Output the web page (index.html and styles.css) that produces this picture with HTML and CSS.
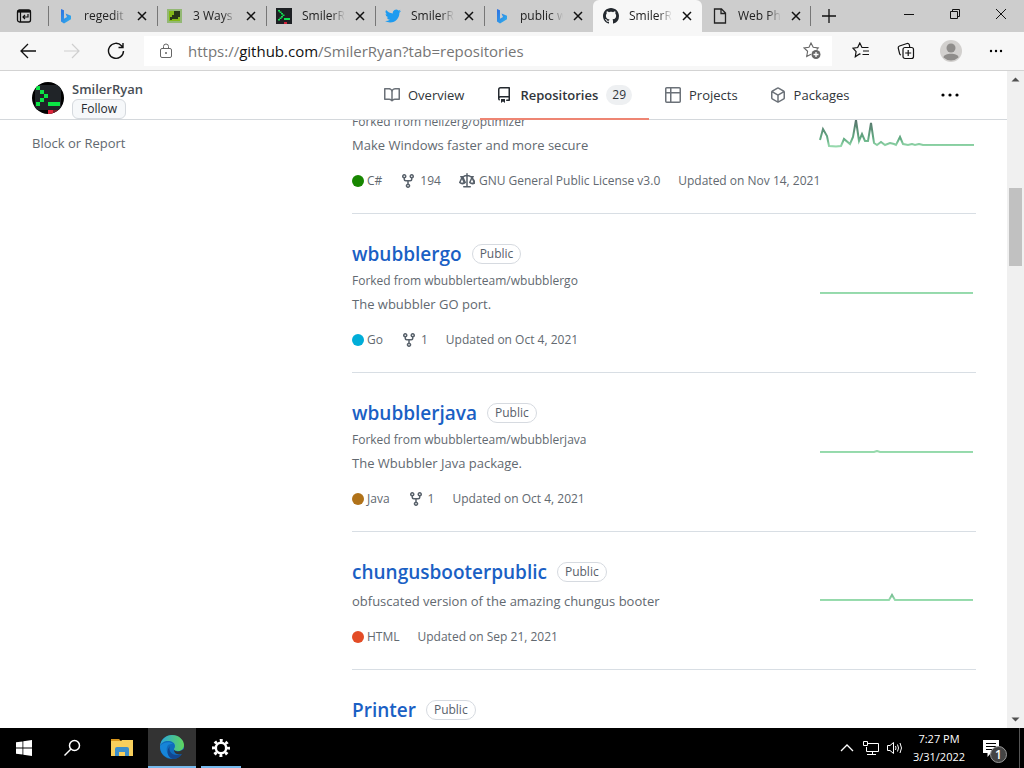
FILE: index.html
```html
<!DOCTYPE html>
<html lang="en">
<head>
<meta charset="utf-8">
<title>SmilerRyan / Repositories</title>
<link rel="stylesheet" href="styles.css">
</head>
<body>
<svg class="defs" aria-hidden="true">
  <defs>
    <linearGradient id="bingFill" x1="0" y1="0" x2="1" y2="1"><stop offset="0" stop-color="#2f6fe0"/><stop offset="1" stop-color="#2fb4ee"/></linearGradient>
    <linearGradient id="sparkFill" gradientUnits="userSpaceOnUse" x1="0" y1="28" x2="0" y2="0"><stop offset="0" stop-color="#98dcae"/><stop offset=".3" stop-color="#62ab82"/><stop offset="1" stop-color="#56706a"/></linearGradient>
    <linearGradient id="edgeTop" x1="0" y1="0" x2="1" y2="0"><stop offset="0" stop-color="#2aa5dc"/><stop offset="1" stop-color="#5fd65c"/></linearGradient>
    <symbol id="x" viewBox="0 0 10 10"><path d="M1 1l8 8M9 1L1 9" stroke="#111" stroke-width="1.500" fill="none"/></symbol>
    <symbol id="bing" viewBox="0 0 16 16"><path d="M3 1l3 1.200v8.500L9 9 7.500 5.500 13 7.700v3.500L6 15.500 3 13.500z" fill="url(#bingFill)"/></symbol>
    <symbol id="prompt" viewBox="0 0 16 16"><path d="M0 0h16v16H0z" fill="#1d2023"/><path d="M2 2h2v1.500h1.500V5H7v1.500h1.500V8H7v1.500H5.500V11H4v1.500H2V11h1.500V9.500H5V8h1.500V6.500H5V5H3.500V3.500H2zM8 10h6v2H8z" fill="#12e052"/><path d="M8 14h3v2H8z" fill="#d3233b"/></symbol>
    <symbol id="fork" viewBox="0 0 16 16"><path fill-rule="evenodd" d="M5 3.250a.75.75 0 11-1.500 0 .75.75 0 011.500 0zm0 2.122a2.250 2.250 0 10-1.500 0v.878A2.250 2.250 0 005.750 8.500h1.500v2.128a2.251 2.251 0 101.500 0V8.500h1.500a2.250 2.250 0 002.250-2.250v-.878a2.250 2.250 0 10-1.500 0v.878a.75.75 0 01-.75.75h-4.500A.75.75 0 015 6.250v-.878zm3.750 7.378a.75.75 0 11-1.500 0 .75.75 0 011.500 0zm3-8.750a.75.75 0 100-1.500.75.75 0 000 1.500z"/></symbol>
  </defs>
</svg>

<header class="tabbar">
  <button class="tab-actions" aria-label="Tab actions menu"><svg width="16" height="16" viewBox="0 0 16 16" fill="none" stroke="#111"><rect x="1.500" y="2" width="13" height="12" rx="2" stroke-width="1.300"/><path d="M1.500 3.300h13" stroke-width="2.600"/><path d="M4.500 4v10" stroke-width="1.200"/><path d="M12 6v3H7M9 7L7 9l2 2" stroke-width="1.200"/></svg></button>
  <div class="tab"><svg class="fav"><use href="#bing"/></svg><span class="tab-text">regedit e</span><button class="close" aria-label="Close tab"><svg><use href="#x"/></svg></button></div>
  <div class="tab"><svg class="fav" viewBox="0 0 16 16"><path d="M0 1h15v14H0z" fill="#93b874"/><path d="M2 3h11v10H2z" fill="#83b818"/><path d="M7 3h6v6h-2v2H5v1H3V9h2V7h2z" fill="#273619"/></svg><span class="tab-text">3 Ways t</span><button class="close" aria-label="Close tab"><svg><use href="#x"/></svg></button></div>
  <div class="tab"><svg class="fav"><use href="#prompt"/></svg><span class="tab-text">SmilerR</span><button class="close" aria-label="Close tab"><svg><use href="#x"/></svg></button></div>
  <div class="tab"><svg class="fav" viewBox="0 0 24 24"><path fill="#1d9bf0" d="M23.950 4.570a10 10 0 01-2.820.77 4.960 4.960 0 002.160-2.720c-.95.55-2 .96-3.130 1.180a4.920 4.920 0 00-8.380 4.480C7.690 8.100 4.070 6.130 1.640 3.160a4.920 4.920 0 001.520 6.570 4.900 4.900 0 01-2.230-.61v.06a4.920 4.920 0 003.950 4.830 5 5 0 01-2.210.08 4.940 4.940 0 004.600 3.420A9.870 9.870 0 010 19.540a14 14 0 007.550 2.210c9.050 0 14-7.500 14-13.980 0-.21 0-.42-.02-.63a9.940 9.940 0 002.420-2.570z"/></svg><span class="tab-text">SmilerR</span><button class="close" aria-label="Close tab"><svg><use href="#x"/></svg></button></div>
  <div class="tab"><svg class="fav"><use href="#bing"/></svg><span class="tab-text">public w</span><button class="close" aria-label="Close tab"><svg><use href="#x"/></svg></button></div>
  <div class="tab active"><svg class="fav" viewBox="0 0 16 16"><path fill="#24292f" fill-rule="evenodd" d="M8 0C3.580 0 0 3.580 0 8c0 3.540 2.290 6.530 5.470 7.590.4.070.55-.17.55-.38 0-.19-.01-.82-.01-1.490-2.010.37-2.530-.49-2.690-.94-.09-.23-.48-.94-.82-1.130-.28-.15-.68-.52-.01-.53.63-.01 1.080.58 1.230.82.720 1.210 1.870.87 2.330.66.070-.52.28-.87.51-1.070-1.780-.2-3.640-.89-3.640-3.950 0-.87.310-1.590.82-2.150-.08-.2-.36-1.020.08-2.120 0 0 .67-.21 2.200.82.640-.18 1.320-.27 2-.27.680 0 1.360.09 2 .27 1.530-1.040 2.200-.82 2.200-.82.440 1.100.16 1.920.08 2.120.510.56.82 1.270.82 2.150 0 3.070-1.870 3.750-3.650 3.950.29.25.54.73.54 1.480 0 1.070-.01 1.930-.01 2.200 0 .21.15.46.55.38A8.010 8.010 0 0016 8c0-4.420-3.580-8-8-8z"/></svg><span class="tab-text">SmilerR</span><button class="close" aria-label="Close tab"><svg><use href="#x"/></svg></button></div>
  <div class="tab last"><svg class="fav" viewBox="0 0 16 16" fill="none" stroke="#222" stroke-width="1.300"><path d="M2.500 1h7l4 4v10h-11zM9 1v4.500h4.500"/></svg><span class="tab-text">Web Ph</span><button class="close" aria-label="Close tab"><svg><use href="#x"/></svg></button></div>
  <button class="new-tab" aria-label="New tab"><svg width="14" height="14" viewBox="0 0 14 14"><path d="M7 0v14M0 7h14" stroke="#111" stroke-width="1.300"/></svg></button>
  <div class="window-controls">
    <button aria-label="Minimize"><svg width="12" height="12" viewBox="0 0 12 12"><path d="M1 6.500h10" stroke="#111"/></svg></button>
    <button aria-label="Restore"><svg width="12" height="12" viewBox="0 0 12 12" fill="none" stroke="#111"><path d="M1.500 3.500h7v7h-7zM3.500 3.500v-2h7v7h-2"/></svg></button>
    <button aria-label="Close window"><svg width="12" height="12" viewBox="0 0 12 12"><path d="M1 1l10 10M11 1L1 11" stroke="#111"/></svg></button>
  </div>
</header>

<div class="toolbar">
  <div class="history">
    <button aria-label="Back"><svg width="18" height="18" viewBox="0 0 18 18" fill="none" stroke="#111" stroke-width="1.300"><path d="M17 9H2M9 2L2 9l7 7"/></svg></button>
    <button aria-label="Forward" disabled><svg width="18" height="18" viewBox="0 0 18 18" fill="none" stroke="#cfcfcf" stroke-width="1.200"><path d="M1 9h15M9 2l7 7-7 7"/></svg></button>
    <button aria-label="Refresh"><svg width="18" height="18" viewBox="0 0 18 18" fill="none" stroke="#111" stroke-width="1.400"><path d="M16.500 9a7.500 7.500 0 11-2-5.300L16 5.200M16 1v4.500h-4.500"/></svg></button>
  </div>
  <div class="address">
    <svg width="14" height="16" viewBox="0 0 14 16" fill="none" stroke="#666"><rect x="1.500" y="5.500" width="11" height="9" rx="1.500"/><path d="M4.500 5.500V3.500a2.500 2.500 0 015 0v2"/><circle cx="7" cy="10" r=".6" fill="#666"/></svg>
    <div class="url" role="textbox" aria-label="Address">https://<span class="host">github.com</span>/SmilerRyan?tab=repositories</div>
    <button aria-label="Add to favorites"><svg width="18" height="18" viewBox="0 0 18 18" fill="none" stroke="#666" stroke-width="1.100"><path d="M8 12.200l-4.300 2.300.9-5.200L1 6l5-.7L8 1l2.200 4.300 5 .7-1.500 1.500"/><circle cx="13" cy="12.500" r="4.500" fill="#666" stroke="none"/><path d="M13 10v5M10.500 12.500h5" stroke="#fff" stroke-width="1.300"/></svg></button>
  </div>
  <div class="tools">
    <button aria-label="Favorites"><svg width="18" height="18" viewBox="0 0 18 18" fill="none" stroke="#111" stroke-width="1.200"><path d="M8.500 12.200L7.500 12l-4.200 2.700.8-5L1 6.200l4.700-.7L7.800 1l2.200 4.500h6.500M11 9h6M10.500 12.500H17"/></svg></button>
    <button aria-label="Collections"><svg width="18" height="18" viewBox="0 0 18 18" fill="none" stroke="#111" stroke-width="1.200"><rect x="6" y="5.500" width="10.500" height="11" rx="2"/><path d="M11.200 8v6M8.200 11h6M4 13a2 2 0 01-1.400-1.400L1.200 6A2 2 0 012.500 4L10 1.500a2 2 0 012.400 1.500l.3 2"/></svg></button>
    <button aria-label="Profile"><svg width="22" height="22" viewBox="0 0 22 22"><circle cx="11" cy="11" r="11" fill="#d2d0ce"/><circle cx="11" cy="8" r="4.500" fill="#8f8d8b"/><path d="M3.500 17.500c0-5 15-5 15 0a11 11 0 01-15 0z" fill="#8f8d8b"/></svg></button>
    <button aria-label="Settings and more"><svg width="14" height="4" viewBox="0 0 14 4"><circle cx="2" cy="2" r="1.200"/><circle cx="7" cy="2" r="1.200"/><circle cx="12" cy="2" r="1.200"/></svg></button>
  </div>
</div>

<div class="viewport">
  <div class="page">
    <div class="profile-bar">
      <div class="user">
        <svg class="avatar" viewBox="0 0 32 32"><defs><clipPath id="round"><circle cx="16" cy="16" r="16"/></clipPath></defs><g clip-path="url(#round)"><path d="M0 0h32v32H0z" fill="#000"/><path d="M3 3h26v25H3z" fill="#202428"/><path d="M4 4h4v4h4v4h4v4h-4v4H8v4H4v-4h4v-4h4v-4H8V8H4zM16 20h12v4H16z" fill="#0be545"/><path d="M16 28h5v4h-5z" fill="#e0243b"/><path d="M21 28h5v4h-5z" fill="#7a1e28"/></g></svg>
        <div><strong class="name">SmilerRyan</strong><button class="follow">Follow</button></div>
      </div>
      <nav class="nav">
        <a href="#overview"><svg viewBox="0 0 16 16"><path fill-rule="evenodd" d="M0 1.750A.75.75 0 01.75 1h4.253c1.227 0 2.317.59 3 1.501A3.744 3.744 0 0111.006 1h4.245a.75.75 0 01.75.75v10.500a.75.75 0 01-.75.75h-4.507a2.250 2.250 0 00-1.591.659l-.622.621a.75.75 0 01-1.060 0l-.622-.621A2.250 2.250 0 005.258 13H.75a.75.75 0 01-.75-.75V1.750zm8.755 3a2.250 2.250 0 012.250-2.250H14.500v9h-3.757c-.71 0-1.400.201-1.992.572l.004-7.322zm-1.504 7.324l.004-5.073-.002-2.253A2.250 2.250 0 005.003 2.500H1.500v9h3.757a3.750 3.750 0 011.994.574z"/></svg>Overview</a>
        <a href="#repositories" class="current"><svg viewBox="0 0 16 16"><path fill-rule="evenodd" d="M2 2.500A2.500 2.500 0 014.500 0h8.750a.75.75 0 01.75.75v12.500a.75.75 0 01-.75.75h-2.500a.75.75 0 110-1.500h1.750v-2h-8a1 1 0 00-.714 1.700.75.75 0 01-1.072 1.050A2.495 2.495 0 012 11.500v-9zm10.500-1V9h-8c-.356 0-.694.074-1 .208V2.500a1 1 0 011-1h8zM5 12.250v3.250a.25.25 0 00.4.2l1.450-1.087a.25.25 0 01.3 0L8.600 15.700a.25.25 0 00.4-.2v-3.250a.25.25 0 00-.25-.25h-3.500a.25.25 0 00-.25.25z"/></svg>Repositories<span class="count">29</span></a>
        <a href="#projects"><svg viewBox="0 0 16 16"><path fill-rule="evenodd" d="M0 1.750C0 .784.784 0 1.750 0h12.500C15.216 0 16 .784 16 1.750v12.500A1.750 1.750 0 0114.250 16H1.750A1.750 1.750 0 010 14.250V1.750zM1.500 6.500v7.750c0 .138.112.25.25.25H5v-8H1.500zM5 5H1.500V1.750a.25.25 0 01.25-.25H5V5zm1.500 1.500v8h7.750a.25.25 0 00.25-.25V6.500h-8zm8-1.500h-8V1.500h7.750a.25.25 0 01.25.25V5z"/></svg>Projects</a>
        <a href="#packages"><svg viewBox="0 0 16 16"><path fill-rule="evenodd" d="M8.878.392a1.750 1.750 0 00-1.756 0l-5.250 3.045A1.750 1.750 0 001 4.951v6.098c0 .624.332 1.200.872 1.514l5.250 3.045a1.750 1.750 0 001.756 0l5.250-3.045c.54-.313.872-.89.872-1.514V4.951c0-.624-.332-1.200-.872-1.514L8.878.392zM7.875 1.690a.25.25 0 01.25 0l4.630 2.685L8 7.133 3.245 4.375l4.630-2.685zM2.500 5.677v5.372c0 .09.047.171.125.216l4.625 2.683V8.432L2.500 5.677zm6.250 8.271l4.625-2.683a.25.25 0 00.125-.216V5.677L8.750 8.432v5.516z"/></svg>Packages</a>
      </nav>
      <button class="more" aria-label="More"><svg width="18" height="4" viewBox="0 0 18 4"><circle cx="2" cy="2" r="1.600"/><circle cx="9" cy="2" r="1.600"/><circle cx="16" cy="2" r="1.600"/></svg></button>
    </div>
    <div class="content">
      <aside class="sidebar"><button class="report">Block or Report</button></aside>
      <main class="repos">
        <article class="repo partial">
          <div class="info">
            <p class="source">Forked from <a href="#optimizer">hellzerg/optimizer</a></p>
            <p class="about">Make Windows faster and more secure</p>
            <div class="meta"><span class="lang"><i class="dot csharp"></i>C#</span><a href="#forks"><svg><use href="#fork"/></svg>194</a><span><svg viewBox="0 0 16 16"><path fill-rule="evenodd" d="M8.750.75a.75.75 0 00-1.500 0V2h-.984c-.305 0-.604.08-.869.230l-1.288.737A.25.25 0 013.984 3H1.750a.75.75 0 000 1.500h.428L.066 9.192a.75.75 0 00.154.838l.53-.53-.53.530a4.500 4.500 0 006.560 0L6.250 9.500l.53.53a.75.75 0 00.154-.838L4.822 4.500a1.800 1.800 0 00.031-.268l1.289-.736A.25.25 0 016.266 3.500h.984V13h-2.500a.75.75 0 000 1.500h6.500a.75.75 0 000-1.500h-2.500V3.500h.984a.25.25 0 01.124.033l1.290.736c.264.152.563.231.868.231h.162l-2.112 4.692a.75.75 0 00.154.838 4.500 4.500 0 006.560 0 .75.75 0 00.154-.838L13.822 4.500h.428a.75.75 0 000-1.500h-2.234a.25.25 0 01-.124-.033l-1.290-.736A1.750 1.750 0 009.734 2H8.750V.75zM1.695 9.227c.285.135.718.273 1.305.273s1.020-.138 1.305-.273L3 6.327l-1.305 2.900zm10 0c.285.135.718.273 1.305.273s1.020-.138 1.305-.273L13 6.327l-1.305 2.900z"/></svg>GNU General Public License v3.0</span><span>Updated on Nov 14, 2021</span></div>
          </div>
          <svg class="spark" viewBox="0 0 155 30"><path d="M1 21L4 10l4 7 2 10 7 .5 5-.5 3-7 6 5 3-7 3-17 3 21 3-7 3 7h3l3-18 3 20 3 2 4-3 4 3 5-2 4 1 2 1 4-8 3 7 5 1 4-1 3 1 4-1 4 1h54"/></svg>
        </article>
        <article class="repo">
          <div class="info">
            <h3><a href="#wbubblergo">wbubblergo</a><span class="label">Public</span></h3>
            <p class="source">Forked from <a href="#source-go">wbubblerteam/wbubblergo</a></p>
            <p class="about">The wbubbler GO port.</p>
            <div class="meta"><span class="lang"><i class="dot go"></i>Go</span><a href="#forks-go"><svg><use href="#fork"/></svg>1</a><span>Updated on Oct 4, 2021</span></div>
          </div>
          <svg class="spark" viewBox="0 0 155 30"><path d="M1 28h153"/></svg>
        </article>
        <article class="repo">
          <div class="info">
            <h3><a href="#wbubblerjava">wbubblerjava</a><span class="label">Public</span></h3>
            <p class="source">Forked from <a href="#source-java">wbubblerteam/wbubblerjava</a></p>
            <p class="about">The Wbubbler Java package.</p>
            <div class="meta"><span class="lang"><i class="dot java"></i>Java</span><a href="#forks-java"><svg><use href="#fork"/></svg>1</a><span>Updated on Oct 4, 2021</span></div>
          </div>
          <svg class="spark" viewBox="0 0 155 30"><path d="M1 28h54l3-1 3 1h93"/></svg>
        </article>
        <article class="repo">
          <div class="info">
            <h3><a href="#chungusbooterpublic">chungusbooterpublic</a><span class="label">Public</span></h3>
            <p class="about">obfuscated version of the amazing chungus booter</p>
            <div class="meta"><span class="lang"><i class="dot html"></i>HTML</span><span>Updated on Sep 21, 2021</span></div>
          </div>
          <svg class="spark" viewBox="0 0 155 30"><path d="M1 28h69l3-5 3 5h78"/></svg>
        </article>
        <article class="repo">
          <div class="info"><h3><a href="#printer">Printer</a><span class="label">Public</span></h3></div>
        </article>
      </main>
    </div>
  </div>
  <div class="scrollbar" aria-hidden="true">
    <svg viewBox="0 0 17 17"><path d="M4.500 10.500h8l-4-4z" fill="#505050"/></svg>
    <div class="track"><div class="thumb"></div></div>
    <svg viewBox="0 0 17 17"><path d="M4.500 6.500h8l-4 4z" fill="#505050"/></svg>
  </div>
</div>

<footer class="taskbar">
  <button aria-label="Start"><svg width="16" height="16" viewBox="0 0 16 16" fill="#fff"><path d="M0 2.300l6.500-.9v6.200H0zM7.300 1.300L16 0v7.600H7.300zM0 8.400h6.500v6.200L0 13.700zM7.300 8.400H16V16l-8.700-1.300z"/></svg></button>
  <button aria-label="Search"><svg width="18" height="18" viewBox="0 0 18 18" fill="none" stroke="#fff" stroke-width="1.500"><circle cx="11.500" cy="6.500" r="5"/><path d="M8 10l-6.500 6.500"/></svg></button>
  <button class="app" aria-label="File Explorer"><svg width="22" height="20" viewBox="0 0 22 20"><path d="M0 1h8l2 2H0z" fill="#d8961d"/><path d="M0 3h10l1-1h11v16H0z" fill="#f8cf5c"/><path d="M4 18v-7q0-2 2-2h10q2 0 2 2v7h-4v-4H8v4z" fill="#3c8fcb"/></svg></button>
  <button class="app focused" aria-label="Microsoft Edge"><svg width="24" height="24" viewBox="0 0 24 24"><circle cx="12" cy="12" r="12" fill="#0f6cbd"/><path d="M0 11C1 4 6 0 12 0c7 0 12 5 12 10 0 4-3 6-6 6-3 0-4-1-4-2s1-1 1-3c0-3-3-5-7-5-4 0-7 2-8 5z" fill="url(#edgeTop)"/><path d="M8 10c-3 4-1 11 5 13-7 1-13-4-13-12 3-4 10-5 13-2-2 0-4 0-5 1z" fill="#1685d8"/><path d="M10 11c-2 4 1 9 7 9 2 0 3 0 5-1-2 3-5 5-9 5-6-1-7-9-3-13z" fill="#12468f"/><path d="M14 15c2 2 6 2 10-1v4c-5 3-10 1-10-3z" fill="#333"/></svg></button>
  <button class="app running" aria-label="Settings"><svg width="18" height="18" viewBox="0 0 18 18" fill="none" stroke="#fff"><circle cx="9" cy="9" r="5.200" stroke-width="2.500"/><circle cx="9" cy="9" r="7.500" stroke-width="3" stroke-dasharray="2.900 2.990" stroke-dashoffset="1.450"/></svg></button>
  <div class="tray">
    <button aria-label="Show hidden icons"><svg width="14" height="14" viewBox="0 0 14 14" fill="none" stroke="#fff" stroke-width="1.300"><path d="M1 10l6-6 6 6"/></svg></button>
    <button aria-label="Network"><svg width="16" height="16" viewBox="0 0 16 16" fill="none" stroke="#fff"><path d="M4.500 3.500h11v8H3.500V7M.5 1.500h4v4h-4zM9.500 11.500v3M4 14.500h9"/></svg></button>
    <button aria-label="Volume"><svg width="18" height="14" viewBox="0 0 18 14" fill="none" stroke="#fff"><path d="M1.500 4.500h2.500l3.500-3v11L4 9.500H1.500zM9.500 5q1 2 0 4M11.500 3.500q2 3.500 0 7M14 2q3 5 0 10"/></svg></button>
    <div class="clock"><span>7:27 PM</span><span>3/31/2022</span></div>
    <button class="notifications" aria-label="Notifications, 1 new"><svg width="16" height="17" viewBox="0 0 16 17"><path d="M0 0h16v13h-8l-3.500 4v-4H0z" fill="#fff"/><path d="M3 3.500h10M3 6.500h10M3 9.500h6" stroke="#000"/></svg><span class="badge">1</span></button>
  </div>
</footer>
</body>
</html>
```
FILE: styles.css
```css
* { box-sizing: border-box; }

body {
  margin: 0;
  height: 100vh;
  display: flex;
  flex-direction: column;
  overflow: hidden;
  background: #fff;
  color: #626970;
  font: 13px/20px "Open Sans", "Noto Sans", sans-serif;
}

button {
  display: flex;
  align-items: center;
  justify-content: center;
  padding: 0;
  border: 0;
  background: none;
  color: inherit;
  font: inherit;
}

a { color: inherit; text-decoration: none; }
p, h3 { margin: 0; }
svg { flex: none; }
.defs { position: absolute; width: 0; height: 0; }

/* Browser tabs */
.tabbar {
  display: flex;
  flex: none;
  height: 32px;
  background: #cdcdcd;
  color: #222;
  font-size: 12px;
}
.tab-actions { width: 48px; }
.tab {
  display: flex;
  align-items: center;
  flex: 0 1 109px;
  min-width: 0;
  padding: 0 10px;
  background: linear-gradient(#777, #777) left 50% / 1px 20px no-repeat;
}
.tab.active {
  border-radius: 6px 6px 0 0;
  background: #f7f7f7;
}
.tab.last { background: linear-gradient(#777, #777) right 50% / 1px 20px no-repeat; }
.fav { width: 16px; height: 16px; }
.tab-text {
  flex: 1;
  min-width: 0;
  margin: 0 4px 0 10px;
  white-space: nowrap;
  -webkit-mask-image: linear-gradient(90deg, #000 60%, transparent 88%);
  mask-image: linear-gradient(90deg, #000 60%, transparent 88%);
}
.close svg { width: 10px; height: 10px; }
.new-tab { width: 36px; }
.window-controls { display: flex; margin-left: auto; padding-bottom: 4px; }
.window-controls button { width: 46px; }

/* Address bar */
.toolbar {
  display: flex;
  flex: none;
  align-items: center;
  height: 39px;
  border-bottom: 1px solid #d3d3d3;
  background: #f7f7f7;
}
.history { display: flex; padding: 0 6px; }
.history button { width: 44px; height: 30px; }
.address {
  display: flex;
  flex: 1;
  align-items: center;
  gap: 15px;
  height: 30px;
  padding: 0 11px 0 15px;
  background: #fff;
}
.url { flex: 1; color: #767676; font-size: 15px; }
.host { color: #111; }
.tools { display: flex; padding: 0 6px; }
.tools button { width: 45px; height: 30px; }

/* Page and its scrollbar */
.viewport { display: flex; flex: 1; min-height: 0; }
.page { flex: 1; min-width: 0; overflow: hidden; }
.scrollbar {
  display: flex;
  flex-direction: column;
  width: 17px;
  background: #f0f0f0;
}
.scrollbar svg { width: 17px; height: 17px; }
.track { flex: 1; padding: 100px 2px 0; }
.thumb { height: 78px; background: #c1c1c1; }

.profile-bar {
  position: relative;
  z-index: 1;
  display: flex;
  height: 49px;
  padding: 0 32px;
  border-bottom: 1px solid #d4d8dc;
  background: #fff;
}
.user { display: flex; gap: 8px; width: 336px; padding-top: 8px; }
.avatar { width: 32px; height: 32px; margin-top: 3px; }
.name { display: block; color: #484e55; font-weight: 600; }
.follow {
  height: 20px;
  padding: 0 8px;
  border: 1px solid #d5d9de;
  border-radius: 6px;
  background: #f6f8fa;
  color: #24292f;
  font-size: 12px;
  font-weight: 500;
}
.nav { display: flex; color: #30353a; }
.nav a { display: flex; align-items: center; gap: 8px; padding: 0 16px; }
.nav svg { width: 16px; height: 16px; fill: #6b7178; }
.nav .current {
  margin-bottom: -1px;
  padding-right: 17px;
  border-bottom: 2px solid #ee8573;
  font-weight: 600;
}
.nav .current svg { fill: #24292f; }
.count {
  padding: 0 6px;
  border-radius: 10px;
  background: #eef0f2;
  font-size: 12px;
  font-weight: 500;
}
.more { margin-left: auto; padding: 0 16px; }

.content {
  display: grid;
  grid-template-columns: 296px minmax(0, 1fr);
  gap: 24px;
  padding: 0 31px 0 32px;
}
.sidebar { padding-top: 13px; }

/* Repository list */
.repos { margin-top: -9px; }
.repo {
  display: flex;
  align-items: center;
  justify-content: space-between;
  padding: 24px 0 23px;
  border-bottom: 1px solid #d8dee4;
}
.info { flex: 1; min-width: 0; }
.partial { align-items: flex-start; padding-top: 0; }
.repo h3 {
  display: flex;
  align-items: center;
  gap: 10px;
  color: #1a60c4;
  font-size: 19px;
  font-weight: 600;
  line-height: 32px;
}
.label {
  padding: 0 7px;
  border: 1px solid #d6dae0;
  border-radius: 10px;
  color: #57606a;
  font-size: 12px;
  font-weight: 500;
  line-height: 18px;
}
.source { font-size: 12px; line-height: 21px; }
.about { margin-top: 3px; }
.meta {
  display: flex;
  gap: 18px;
  margin-top: 17px;
  font-size: 12px;
  line-height: 18px;
  white-space: nowrap;
}
.meta > * { display: flex; align-items: center; gap: 4px; }
.meta svg { width: 16px; height: 16px; fill: #57606a; }
.meta .lang { gap: 3px; }
.dot { width: 12px; height: 12px; border-radius: 50%; }
.csharp { background: #178600; }
.go { background: #00add8; }
.java { background: #b07219; }
.html { background: #e34c26; }
.spark {
  width: 155px;
  height: 30px;
  margin: 0 2px 28px 0;
  fill: none;
  stroke: url(#sparkFill);
  stroke-width: 2;
}
.partial .spark { margin-top: 8px; }

/* Taskbar */
.taskbar {
  display: flex;
  flex: none;
  height: 40px;
  background: #000;
  color: #fff;
}
.taskbar > button { width: 48px; }
.taskbar > .app { margin-left: 2px; }
.taskbar > .focused { border-bottom: 2px solid #76b9ed; background: #333; }
.taskbar > .running {
  margin-left: 1px;
  background: linear-gradient(#76b9ed, #76b9ed) 50% 100% / 40px 2px no-repeat;
}
.tray { display: flex; margin-left: auto; padding-right: 4px; }
.tray button { width: 24px; }
.clock {
  display: flex;
  flex-direction: column;
  align-items: center;
  justify-content: center;
  width: 64px;
  font-size: 11px;
  line-height: 18px;
}
.tray .notifications { position: relative; width: 49px; padding-right: 8px; border-right: 1px solid #555; }
.badge {
  position: absolute;
  left: 19px;
  top: 18px;
  width: 17px;
  height: 17px;
  border: 1px solid #999;
  border-radius: 50%;
  background: #444;
  font-size: 12px;
  font-weight: 600;
  line-height: 15px;
}
```
